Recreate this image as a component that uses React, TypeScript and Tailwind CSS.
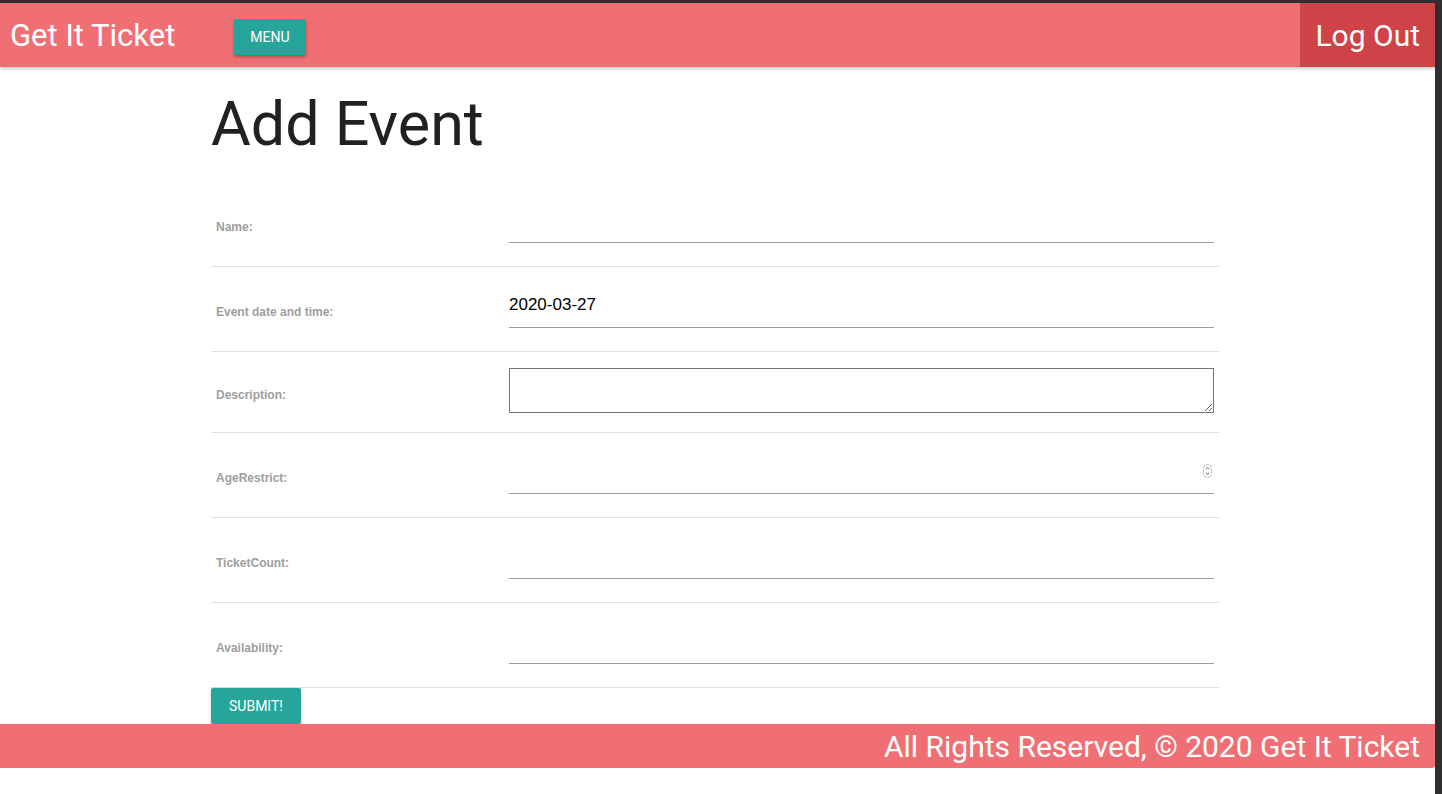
import React from "react";

const fields = [
  { label: "Name:", kind: "text" },
  { label: "Event date and time:", kind: "date" },
  { label: "Description:", kind: "area" },
  { label: "AgeRestrict:", kind: "number" },
  { label: "TicketCount:", kind: "text" },
  { label: "Availability:", kind: "text" },
];

function Field({ kind }: { kind: string }) {
  if (kind === "area") {
    return (
      <textarea
        className="block w-full h-[45px] border border-[#767676] bg-white resize-y outline-none"
        readOnly
      />
    );
  }
  return (
    <div className="relative">
      <input
        type="text"
        readOnly
        defaultValue={kind === "date" ? "2020-03-27" : ""}
        className="block w-full h-[46px] mb-2 border-b border-[#9e9e9e] bg-transparent text-[17px] text-black outline-none font-['Liberation_Sans',sans-serif]"
      />
      {kind === "number" && (
        <svg
          className="absolute right-[2px] top-[16px]"
          width="9"
          height="14"
          viewBox="0 0 9 14"
          fill="none"
        >
          <rect x="0.5" y="0.5" width="8" height="13" rx="4" stroke="#c8c8c8" />
          <path d="M2.8 5.2 4.5 3.6 6.2 5.2M2.8 8.8 4.5 10.4 6.2 8.8" stroke="#555" strokeWidth="0.9" />
        </svg>
      )}
    </div>
  );
}

export default function App() {
  return (
    <div className="flex min-h-screen bg-[#2f2f2f] pt-[3px] font-['Roboto',sans-serif]">
      <div className="w-[1435px] bg-white flex flex-col">
        <nav className="shrink-0 h-16 bg-[#ef6f74] flex items-center shadow-[0_2px_3px_rgba(0,0,0,0.2)] relative z-10">
          <a className="pl-[10px] text-white text-[31px] leading-none">Get It Ticket</a>
          <button className="ml-[59px] mt-1 h-9 px-4 bg-[#26a69a] text-white text-sm rounded-[2px] shadow-[0_2px_3px_rgba(0,0,0,0.3)]">
            MENU
          </button>
          <a className="ml-auto h-full px-[15px] bg-[#cd4347] text-white text-[30px] flex items-center">
            Log Out
          </a>
        </nav>

        <main className="w-[1008px] ml-[211px]">
          <h1 className="pt-[22px] pb-[23px] text-[#212121] text-[61px] leading-[70px]">
            Add Event
          </h1>
          <table className="w-full border-collapse">
            <tbody>
              {fields.map((f) => (
                <tr key={f.label} className="border-b border-[#e0e0e0]">
                  <td className="w-[293px] px-[5px] pt-[18px] pb-[12px] align-middle text-[12px] font-bold text-[#9e9e9e] font-['Liberation_Sans',sans-serif]">
                    {f.label}
                  </td>
                  <td className={`px-[5px] ${f.kind === "area" ? "pt-4 pb-[19px]" : "py-[15px]"}`}>
                    <Field kind={f.kind} />
                  </td>
                </tr>
              ))}
            </tbody>
          </table>
          <button className="h-9 w-[90px] bg-[#26a69a] text-white text-sm rounded-[2px] shadow-[0_1px_3px_rgba(0,0,0,0.2)]">
            SUBMIT!
          </button>
        </main>

        <footer className="shrink-0 h-11 bg-[#ef6f74] rounded-br-[3px] flex items-center justify-end pr-[15px] text-white text-[30px]">
          All Rights Reserved, © 2020 Get It Ticket
        </footer>
      </div>
    </div>
  );
}
